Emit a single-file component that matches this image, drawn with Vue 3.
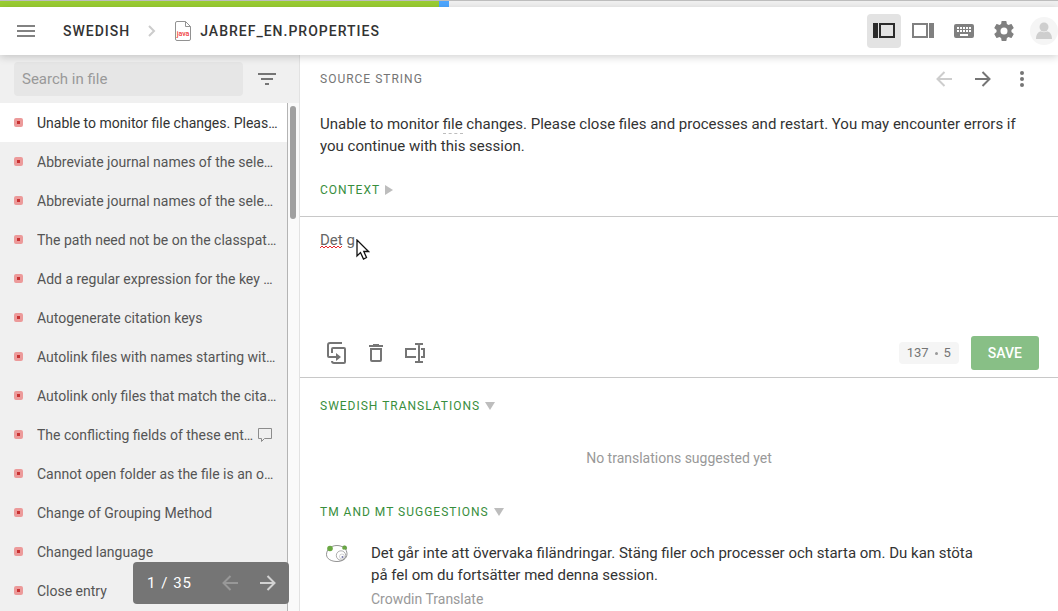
<script setup>
import { ref } from 'vue'

const strings = [
  { text: 'Unable to monitor file changes. Please close files and processes and restart.', active: true },
  { text: 'Abbreviate journal names of the selected entries (DEFAULT abbreviation)' },
  { text: 'Abbreviate journal names of the selected entries (MEDLINE abbreviation)' },
  { text: 'The path need not be on the classpath of JabRef.' },
  { text: 'Add a regular expression for the key pattern.' },
  { text: 'Autogenerate citation keys' },
  { text: 'Autolink files with names starting with the citation key' },
  { text: 'Autolink only files that match the citation key' },
  { text: 'The conflicting fields of these entries will be merged', comment: true },
  { text: 'Cannot open folder as the file is an online link.' },
  { text: 'Change of Grouping Method' },
  { text: 'Changed language' },
  { text: 'Close entry' }
]

const search = ref('')
const translation = ref('Det g')
const sourceLength = 137
const progress = { approved: 439, translated: 10, total: 1058 }
const share = (n) => `${(n / progress.total) * 100}%`
</script>

<template>
  <div class="app">
    <div class="progress">
      <div class="approved" :style="{ width: share(progress.approved) }"></div>
      <div class="translated" :style="{ width: share(progress.translated) }"></div>
    </div>

    <header class="topbar">
      <button class="icon-btn menu" aria-label="Menu">
        <svg width="18" height="12" viewBox="0 0 18 12" fill="#828282"><path d="M0 0h18v2H0zM0 5h18v2H0zM0 10h18v2H0z" /></svg>
      </button>
      <nav class="crumbs">
        <a href="#">SWEDISH</a>
        <svg width="8" height="12" viewBox="0 0 8 12" fill="none" stroke="#cccccc" stroke-width="2"><path d="M1 1l5 5-5 5" /></svg>
        <a href="#" class="file">
          <svg width="18" height="22" viewBox="0 0 18 22">
            <path d="M3 1.500h8.500l5 5V19a1.500 1.500 0 0 1-1.500 1.500H3A1.500 1.500 0 0 1 1.500 19V3A1.500 1.500 0 0 1 3 1.500z" fill="#fff" stroke="#929292" />
            <path d="M11.500 1.500v5h5" fill="none" stroke="#929292" />
            <text x="9" y="16" text-anchor="middle" font-size="7" fill="#f03c3c">java</text>
          </svg>
          <span>JABREF_EN.PROPERTIES</span>
        </a>
      </nav>
      <div class="tools">
        <button class="icon-btn tool selected" aria-label="Side-by-side view">
          <svg width="24" height="16" viewBox="0 0 24 16"><path d="M1 0h5v15H1z" fill="#2b2b2b" /><path d="M8 1h14v13H8z" fill="none" stroke="#2b2b2b" stroke-width="2" /></svg>
        </button>
        <button class="icon-btn tool" aria-label="Comfortable view">
          <svg width="24" height="16" viewBox="0 0 24 16"><path d="M17 0h5v15h-5z" fill="#808080" /><path d="M1 1h14v13H1z" fill="none" stroke="#808080" stroke-width="2" /></svg>
        </button>
        <button class="icon-btn tool" aria-label="Keyboard shortcuts">
          <svg width="24" height="24" viewBox="0 0 24 24" fill="#808080"><path fill-rule="evenodd" d="M4 5h16a2 2 0 0 1 2 2v10a2 2 0 0 1-2 2H4a2 2 0 0 1-2-2V7a2 2 0 0 1 2-2zM5 8v2h2V8zM8 8v2h2V8zM11 8v2h2V8zM14 8v2h2V8zM17 8v2h2V8zM5 11v2h2v-2zM8 11v2h2v-2zM11 11v2h2v-2zM14 11v2h2v-2zM17 11v2h2v-2zM8 15v2h8v-2z" /></svg>
        </button>
        <button class="icon-btn tool" aria-label="Settings">
          <svg width="24" height="24" viewBox="0 0 24 24" fill="#808080"><path d="M19.430 12.980c.04-.32.07-.64.07-.98s-.03-.66-.07-.98l2.110-1.650c.19-.15.24-.42.12-.64l-2-3.460c-.12-.22-.39-.3-.61-.22l-2.490 1c-.52-.4-1.080-.73-1.690-.98l-.38-2.650A.488.488 0 0 0 14 2h-4c-.25 0-.46.18-.49.42l-.38 2.650c-.61.25-1.170.59-1.690.98l-2.490-1c-.23-.09-.49 0-.61.22l-2 3.460c-.13.22-.07.49.12.64l2.110 1.650c-.04.32-.07.65-.07.98s.03.66.07.98l-2.110 1.650c-.19.15-.24.42-.12.64l2 3.460c.12.22.39.3.61.22l2.490-1c.52.4 1.080.73 1.690.98l.38 2.650c.03.24.24.42.49.42h4c.25 0 .46-.18.49-.42l.38-2.650c.61-.25 1.170-.59 1.690-.98l2.490 1c.23.09.49 0 .61-.22l2-3.460c.12-.22.07-.49-.12-.64zM12 15.500a3.500 3.500 0 1 1 0-7 3.500 3.500 0 0 1 0 7z" /></svg>
        </button>
        <button class="avatar" aria-label="Profile">
          <svg width="28" height="28" viewBox="0 0 28 28"><circle cx="14" cy="14" r="14" fill="#f5f5f5" /><circle cx="14" cy="10" r="4.500" fill="#cecece" /><path d="M6 22c0-5 2.500-7.500 5-7.500 2 1 4 1 6 0 2.500 0 5 2.500 5 7.500z" fill="#cecece" /></svg>
        </button>
      </div>
    </header>

    <div class="body">
      <aside class="sidebar">
        <div class="search-row">
          <input v-model="search" type="text" placeholder="Search in file" aria-label="Search in file" />
          <button class="icon-btn" aria-label="Filter">
            <svg width="18" height="12" viewBox="0 0 18 12" fill="#757575"><path d="M0 0h18v2H0zM3 5h12v2H3zM7 10h4v2H7z" /></svg>
          </button>
        </div>
        <div class="list-wrap">
          <ul class="list">
            <li v-for="(s, i) in strings" :key="i" :class="{ active: s.active }">
              <span class="status"></span>
              <span class="label">{{ s.text }}</span>
              <svg v-if="s.comment" width="16" height="16" viewBox="0 0 16 16" fill="none" stroke="#8c8c8c"><path d="M1.500 1.500h13v10h-7l-3 3v-3h-3z" /></svg>
            </li>
          </ul>
          <div class="scrollbar"><div class="thumb"></div></div>
        </div>
        <div class="pager">
          <span>1 / 35</span>
          <button class="icon-btn faded" aria-label="Previous page">
            <svg width="16" height="16" viewBox="0 0 16 16" fill="none" stroke="#fff" stroke-width="2"><path d="M16 8H1.500M8.500 1l-7 7 7 7" /></svg>
          </button>
          <button class="icon-btn" aria-label="Next page">
            <svg width="16" height="16" viewBox="0 0 16 16" fill="none" stroke="#d2d2d2" stroke-width="2"><path d="M0 8h14.500M7.500 1l7 7-7 7" /></svg>
          </button>
        </div>
      </aside>

      <main class="main">
        <section class="source">
          <div class="source-head">
            <h2 class="caption">SOURCE STRING</h2>
            <div class="source-nav">
              <button class="icon-btn" aria-label="Previous string">
                <svg width="16" height="16" viewBox="0 0 16 16" fill="none" stroke="#cdcdcd" stroke-width="2"><path d="M16 8H1.500M8.500 1l-7 7 7 7" /></svg>
              </button>
              <button class="icon-btn" aria-label="Next string">
                <svg width="16" height="16" viewBox="0 0 16 16" fill="none" stroke="#757575" stroke-width="2"><path d="M0 8h14.500M7.500 1l7 7-7 7" /></svg>
              </button>
              <button class="icon-btn" aria-label="More">
                <svg width="16" height="16" viewBox="0 0 16 16" fill="#757575"><circle cx="8" cy="2" r="2" /><circle cx="8" cy="8" r="2" /><circle cx="8" cy="14" r="2" /></svg>
              </button>
            </div>
          </div>
          <p class="source-text">Unable to monitor <span class="term">file</span> changes. Please close files and processes and restart. You may encounter errors if you continue with this session.</p>
          <button class="toggle">CONTEXT <svg width="8" height="10" viewBox="0 0 8 10" fill="#bdbdbd"><path d="M0 0l8 5-8 5z" /></svg></button>
        </section>

        <section class="editor">
          <div class="field">
            <textarea v-model="translation" aria-label="Translation" spellcheck="false"></textarea>
            <svg class="squiggle" width="24" height="4" viewBox="0 0 24 4" fill="none" stroke="#e8262b"><path d="M0 3l2-2 2 2 2-2 2 2 2-2 2 2 2-2 2 2 2-2 2 2 2-2" /></svg>
            <svg class="pointer" width="14" height="21" viewBox="0 0 14 21"><path d="M1 1v16l3.500-3.500L7.500 20l3-1.500L7.800 12.500h4.700z" fill="#fff" stroke="#111" stroke-width="1.300" /></svg>
          </div>
          <div class="actions">
            <button class="icon-btn" aria-label="Copy source">
              <svg width="24" height="24" viewBox="0 0 24 24" fill="none" stroke="#757575" stroke-width="2"><path d="M17 2H5a2 2 0 0 0-2 2v11a1 1 0 0 0 1 1h8M7 12V8a1 1 0 0 1 1-1h11a1 1 0 0 1 1 1v13a1 1 0 0 1-1 1H9a2 2 0 0 1-2-2" /><path d="M11 12l5 4-5 4z" fill="#757575" stroke="none" /></svg>
            </button>
            <button class="icon-btn" aria-label="Clear translation">
              <svg width="24" height="24" viewBox="0 0 24 24" fill="#757575"><path fill-rule="evenodd" d="M9 3h6v1h4v2H5V4h4zM6 7h12v12a2 2 0 0 1-2 2H8a2 2 0 0 1-2-2zm2 2v10h8V9z" /></svg>
            </button>
            <button class="icon-btn" aria-label="Select text">
              <svg width="24" height="24" viewBox="0 0 24 24" fill="none" stroke="#757575" stroke-width="2"><path d="M13 16H3V8h10M18 8h3v8h-3M12 3h3l1 1 1-1h3M12 21h3l1-1 1 1h3M16 3v18" /></svg>
            </button>
            <span class="counter">{{ sourceLength }} <i></i> {{ translation.length }}</span>
            <button class="save">SAVE</button>
          </div>
        </section>

        <section class="results">
          <button class="toggle">SWEDISH TRANSLATIONS <svg width="10" height="8" viewBox="0 0 10 8" fill="#bdbdbd"><path d="M0 0h10L5 8z" /></svg></button>
          <p class="empty">No translations suggested yet</p>
          <button class="toggle">TM AND MT SUGGESTIONS <svg width="10" height="8" viewBox="0 0 10 8" fill="#bdbdbd"><path d="M0 0h10L5 8z" /></svg></button>
          <article class="suggestion">
            <svg width="24" height="20" viewBox="0 0 24 20" fill="none" stroke="#777">
              <circle cx="19.500" cy="4" r="2.200" fill="#6aa842" stroke="#4f8a35" stroke-width=".6" />
              <path d="M12 1.500c5.500 0 10 3.600 10 8.300 0 4.800-4.500 7.700-10 7.700S1.500 15 1.500 10.500C1.500 5.600 6 1.500 12 1.500z" fill="#fff" stroke-width=".8" />
              <circle cx="5" cy="4.500" r="2.800" fill="#6aa842" stroke="none" />
              <circle cx="19" cy="4" r="1.800" fill="#6aa842" stroke="none" />
              <circle cx="16" cy="11.500" r="4.700" stroke-width=".6" />
              <circle cx="17" cy="12.500" r="2.500" stroke="#aaa" stroke-width=".5" />
              <circle cx="17.500" cy="13" r="1" fill="#7779a8" stroke="none" />
            </svg>
            <div>
              <p>Det går inte att övervaka filändringar. Stäng filer och processer och starta om. Du kan stöta på fel om du fortsätter med denna session.</p>
              <small>Crowdin Translate</small>
            </div>
          </article>
        </section>
      </main>
    </div>
  </div>
</template>

<style>
body {
  margin: 0;
  overflow: hidden;
}
</style>

<style scoped>
* {
  box-sizing: border-box;
}
.app {
  height: 100vh;
  display: flex;
  flex-direction: column;
  overflow: hidden;
  background: #fff;
  color: #333;
  font-family: Roboto, "Liberation Sans", sans-serif;
  font-size: 15px;
  line-height: 22px;
}
button {
  border: 0;
  padding: 0;
  background: none;
  font: inherit;
  cursor: pointer;
}
svg {
  display: block;
  flex: none;
}
p, h2, ul {
  margin: 0;
  padding: 0;
  font-weight: 400;
}
.icon-btn {
  display: flex;
  align-items: center;
  justify-content: center;
}
.progress {
  display: flex;
  flex: none;
  height: 7px;
  border-top: 1px solid #bdbdbd;
  background: #f0f0f0;
}
.approved {
  background: #9acd32;
}
.translated {
  background: #4da6ff;
}
.topbar {
  position: relative;
  z-index: 2;
  display: flex;
  flex: none;
  align-items: center;
  height: 48px;
  padding-left: 17px;
  background: #fff;
  box-shadow: 0 2px 8px rgba(0, 0, 0, 0.18);
}
.crumbs {
  display: flex;
  align-items: center;
  gap: 18px;
  margin-left: 28px;
  font-size: 14px;
  font-weight: 500;
  letter-spacing: 1px;
}
.crumbs a {
  color: #333;
  text-decoration: none;
}
.crumbs .file {
  display: flex;
  align-items: center;
  gap: 8px;
}
.crumbs text {
  letter-spacing: 0;
}
.tools {
  display: flex;
  align-items: center;
  gap: 6px;
  margin-left: auto;
}
.tool {
  width: 34px;
  height: 34px;
  border-radius: 4px;
}
.tool.selected {
  background: #e3e3e3;
}
.avatar {
  margin-left: 3px;
}
.body {
  display: flex;
  flex: 1;
  min-height: 0;
}
.sidebar {
  position: relative;
  display: flex;
  flex-direction: column;
  flex: none;
  width: 300px;
  background: #f0f0f0;
  border-right: 1px solid #e2e2e2;
}
.search-row {
  display: flex;
  flex: none;
  align-items: center;
  gap: 15px;
  height: 48px;
  padding-left: 14px;
}
.search-row input {
  width: 229px;
  height: 34px;
  padding: 0 8px;
  border: 0;
  border-radius: 4px;
  background: #e6e6e6;
  font: inherit;
}
.search-row input::placeholder {
  color: #999;
}
.list-wrap {
  display: flex;
  flex: 1;
  min-height: 0;
}
.list {
  flex: 1;
  min-width: 0;
  overflow: hidden;
  list-style: none;
  border-right: 1px solid #b4b4b4;
}
.list li {
  display: flex;
  align-items: center;
  height: 39px;
  padding: 0 8px 0 14px;
  color: #555;
  font-size: 14px;
}
.list li.active {
  background: #fff;
  color: #333;
}
.status {
  flex: none;
  width: 9px;
  height: 9px;
  margin-right: 14px;
  border: 3px solid #ec9a9a;
  border-radius: 2px;
  background: #c83232;
}
.label {
  flex: 1;
  overflow: hidden;
  white-space: nowrap;
  text-overflow: ellipsis;
}
.list svg {
  margin-left: 2px;
  margin-right: 6px;
}
.scrollbar {
  width: 11px;
  padding: 3px 3px 0 2px;
  background: #fafafa;
}
.thumb {
  height: 113px;
  border-radius: 3px;
  background: #a0a0a0;
}
.pager {
  position: absolute;
  right: 10px;
  bottom: 7px;
  display: flex;
  align-items: center;
  gap: 22px;
  height: 42px;
  padding: 0 13px 0 14px;
  border-radius: 4px;
  background: #757575;
  color: #fff;
  letter-spacing: 1px;
}
.pager span {
  margin-right: 8px;
}
.faded {
  opacity: 0.25;
}
.main {
  flex: 1;
  min-width: 0;
}
.source {
  padding: 13px 20px 15px;
  border-bottom: 1px solid #c8c8c8;
}
.source-head {
  display: flex;
  align-items: center;
  justify-content: space-between;
  margin-bottom: 23px;
}
.caption {
  color: #757575;
  font-size: 12px;
  letter-spacing: 1px;
}
.source-nav {
  display: flex;
  gap: 23px;
  padding-right: 8px;
}
.term {
  border-bottom: 1px dashed #bdbdbd;
}
.toggle {
  display: flex;
  align-items: center;
  gap: 5px;
  height: 22px;
  color: #388e3c;
  font-size: 12px;
  letter-spacing: 1px;
}
.source .toggle {
  margin-top: 22px;
}
.editor {
  border-bottom: 1px solid #c8c8c8;
}
.field {
  position: relative;
  padding: 12px 20px 0;
}
textarea {
  display: block;
  width: 100%;
  height: 100px;
  padding: 0;
  border: 0;
  outline: 0;
  resize: none;
  background: none;
  color: #666;
  font: inherit;
}
.squiggle {
  position: absolute;
  left: 20px;
  top: 28px;
}
.pointer {
  position: absolute;
  left: 56px;
  top: 22px;
}
.actions {
  display: flex;
  align-items: center;
  gap: 15px;
  height: 48px;
  padding: 0 19px 0 25px;
}
.counter {
  display: flex;
  align-items: center;
  gap: 6px;
  height: 22px;
  margin-left: auto;
  margin-right: -3px;
  padding: 0 8px;
  border-radius: 4px;
  background: #f5f5f5;
  color: #757575;
  font-size: 13px;
}
.counter i {
  width: 3px;
  height: 3px;
  border-radius: 2px;
  background: #999;
}
.save {
  height: 34px;
  padding: 0 17px;
  border-radius: 3px;
  background: #88bf86;
  color: #fff;
  font-size: 14px;
  font-weight: 500;
}
.results {
  padding: 17px 20px 0;
}
.empty {
  margin: 30px 0 32px;
  color: #999;
  font-size: 14px;
  text-align: center;
}
.suggestion {
  display: flex;
  gap: 22px;
  padding: 19px 46px 0 5px;
}
.suggestion svg {
  margin-top: 2px;
}
.suggestion small {
  display: block;
  margin-top: 2px;
  color: #999;
  font-size: 14px;
}
</style>
